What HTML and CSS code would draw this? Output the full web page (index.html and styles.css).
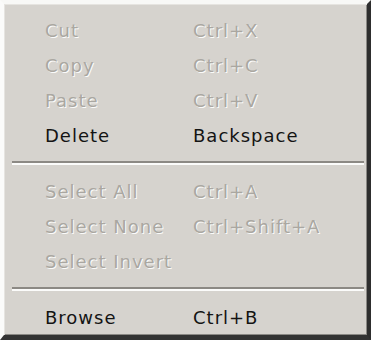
FILE: index.html
```html
<!DOCTYPE html>
<html>
<head>
<meta charset="utf-8">
<link rel="stylesheet" href="styles.css">
</head>
<body>
<div class="menu">
  <div class="item disabled"><span class="label">Cut</span><span class="key">Ctrl+X</span></div>
  <div class="item disabled"><span class="label">Copy</span><span class="key">Ctrl+C</span></div>
  <div class="item disabled"><span class="label">Paste</span><span class="key">Ctrl+V</span></div>
  <div class="item"><span class="label">Delete</span><span class="key">Backspace</span></div>
  <div class="sep"></div>
  <div class="item disabled"><span class="label">Select All</span><span class="key">Ctrl+A</span></div>
  <div class="item disabled"><span class="label">Select None</span><span class="key">Ctrl+Shift+A</span></div>
  <div class="item disabled"><span class="label">Select Invert</span><span class="key"></span></div>
  <div class="sep"></div>
  <div class="item"><span class="label">Browse</span><span class="key">Ctrl+B</span></div>
</div>
</body>
</html>
```
FILE: styles.css
```css
html, body {
  margin: 0;
  padding: 0;
  background: #ffffff;
}
.menu {
  box-sizing: border-box;
  width: 371px;
  height: 340px;
  background: #d6d3ce;
  border-top: 4px solid #f8f8f6;
  border-left: 4px solid #fbfbfa;
  border-right: 4px solid #2e2e2e;
  border-bottom: 5px solid #333333;
  box-shadow: inset 1px 1px 0 #e6e4e0, inset -1px -1px 0 #8a8884;
  padding-top: 9px;
  display: flex;
  flex-direction: column;
  font-family: "DejaVu Sans", Verdana, sans-serif;
  font-size: 18px;
  letter-spacing: 1px;
}
.item {
  display: flex;
  height: 35px;
  line-height: 35px;
  color: #141414;
  white-space: nowrap;
}
.label {
  width: 148px;
  padding-left: 41px;
}
.key {
  flex: 1;
}
.disabled {
  color: #aaa7a1;
  text-shadow: 1px 1px 0 #fbfbfa;
}
.sep {
  height: 21px;
  display: flex;
  flex-direction: column;
  justify-content: flex-start;
  padding-top: 8px;
  box-sizing: border-box;
  margin: 0 3px 0 8px;
}
.sep::before {
  content: "";
  display: block;
  height: 2px;
  background: #8c8984;
}
.sep::after {
  content: "";
  display: block;
  height: 2px;
  background: #fbfbfa;
}
```
